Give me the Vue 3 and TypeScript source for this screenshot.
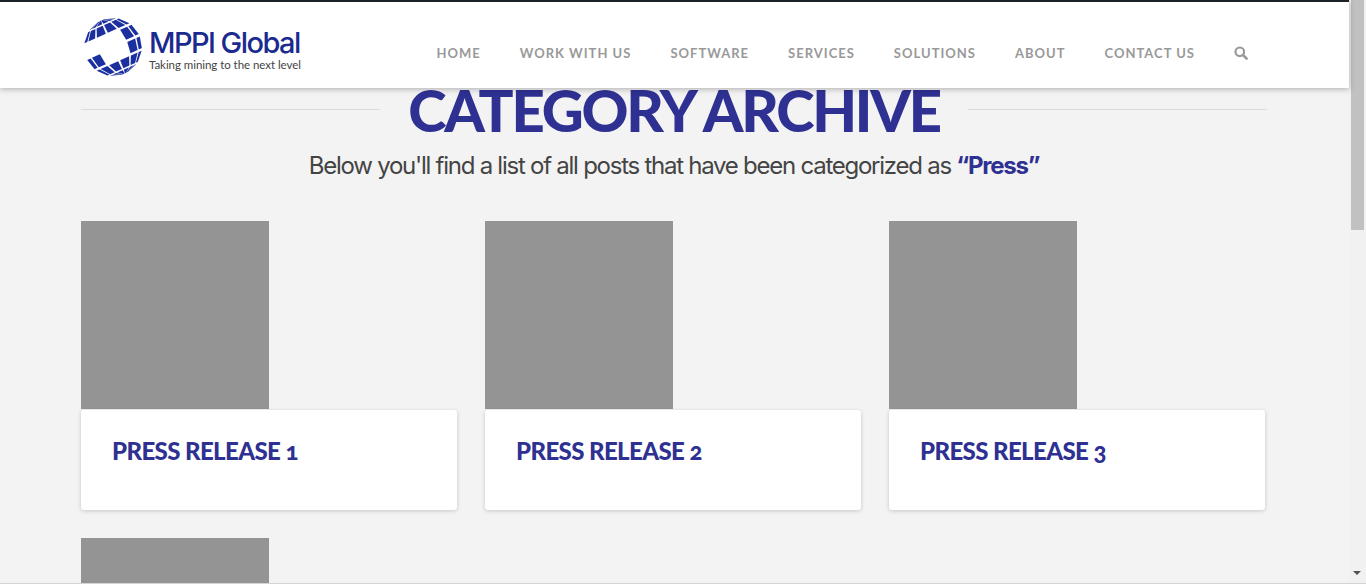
<script setup lang="ts">
const nav: string[] = ['Home', 'Work With Us', 'Software', 'Services', 'Solutions', 'About', 'Contact Us']
const posts: { id: number; title?: string }[] = [
  { id: 1, title: 'Press Release 1' },
  { id: 2, title: 'Press Release 2' },
  { id: 3, title: 'Press Release 3' },
  { id: 4 },
]

function tilePoints(i: number, j: number): string {
  const step = 0.5
  const gap = 0.045
  const rot = -0.42
  const corners: [number, number][] = [
    [i * step + gap, j * step + gap],
    [(i + 1) * step - gap, j * step + gap],
    [(i + 1) * step - gap, (j + 1) * step - gap],
    [i * step + gap, (j + 1) * step - gap],
  ]
  return corners
    .map(([u, v]) => {
      const su = Math.max(-1.57, Math.min(1.57, u))
      const sv = Math.max(-1.57, Math.min(1.57, v))
      const x = Math.sin(su) * Math.cos(sv)
      const y = Math.sin(sv)
      const rx = x * Math.cos(rot) - y * Math.sin(rot)
      const ry = x * Math.sin(rot) + y * Math.cos(rot)
      return `${(30 + rx * 29).toFixed(2)},${(30 + ry * 29).toFixed(2)}`
    })
    .join(' ')
}

const tiles: string[] = []
for (let i = -4; i < 4; i++) {
  for (let j = -4; j < 4; j++) {
    const inner = i >= -1 && i < 1 && j >= -1 && j < 1
    const gapLeft = i <= -2 && j === -1
    if (!inner && !gapLeft) tiles.push(tilePoints(i, j))
  }
}
</script>

<template>
  <div class="screen">
    <div class="page">
      <header class="masthead">
        <a class="brand" href="#">
          <svg class="globe" width="60" height="60" viewBox="0 0 60 60" aria-hidden="true">
            <polygon v-for="(t, k) in tiles" :key="k" :points="t" fill="#1c2f9e" />
          </svg>
          <span class="brand-text">
            <span class="brand-name">MPPI Global</span>
            <span class="brand-tag">Taking mining to the next level</span>
          </span>
        </a>
        <nav class="nav">
          <a v-for="item in nav" :key="item" href="#">{{ item }}</a>
          <svg class="search" width="14" height="14" viewBox="0 0 14 14" aria-label="Search">
            <circle cx="5.8" cy="5.8" r="4.3" fill="none" stroke="#999" stroke-width="2.2" />
            <path d="M9 9l3.6 3.6" stroke="#999" stroke-width="2.6" stroke-linecap="round" />
          </svg>
        </nav>
      </header>

      <main class="content">
        <div class="title-row">
          <span class="rule"></span>
          <h1>Category Archive</h1>
          <span class="rule"></span>
        </div>
        <p class="lede">Below you'll find a list of all posts that have been categorized as <strong>“Press”</strong></p>

        <div class="grid">
          <article v-for="post in posts" :key="post.id" class="post">
            <div class="thumb"></div>
            <div v-if="post.title" class="card">
              <h2>{{ post.title }}</h2>
            </div>
          </article>
        </div>
      </main>
    </div>

    <aside class="scrollbar" aria-hidden="true">
      <div class="thumb-bar"></div>
      <span class="arrow"></span>
    </aside>
    <div class="edge"></div>
  </div>
</template>

<style scoped>
.screen {
  position: relative;
  display: flex;
  width: 1366px;
  height: 584px;
  overflow: hidden;
  background: #f3f3f3;
}
.page {
  flex: 0 0 1349px;
  min-width: 0;
}
.masthead {
  position: relative;
  z-index: 2;
  box-sizing: border-box;
  height: 88px;
  display: flex;
  justify-content: space-between;
  padding: 0 101px 0 85px;
  background: #fff;
  border-top: 2px solid #1c2328;
  box-shadow: 0 1px 6px rgba(0, 0, 0, 0.3);
}
.brand {
  display: flex;
  align-items: center;
  gap: 5px;
  margin-top: 1px;
  height: 60px;
  padding-top: 14px;
  text-decoration: none;
}
.globe {
  flex: none;
  margin-left: -2px;
}
.brand-text {
  display: flex;
  flex-direction: column;
  margin-left: 1px;
  padding-top: 5px;
}
.brand-name {
  font: 500 29px/31px "Inter", sans-serif;
  letter-spacing: -1.55px;
  color: #1b2a8f;
}
.brand-tag {
  font: 400 11.5px/14px "Lato", sans-serif;
  letter-spacing: -0.05px;
  color: #444;
}
.nav {
  display: flex;
  align-items: center;
  gap: 39px;
  padding-top: 15px;
  box-sizing: border-box;
  height: 86px;
}
.nav a {
  font: 700 13px/18px "Lato", sans-serif;
  letter-spacing: 1px;
  text-transform: uppercase;
  text-decoration: none;
  color: #999;
}
.search {
  flex: none;
}
.content {
  width: 1186px;
  margin-left: 81px;
}
.title-row {
  display: flex;
  align-items: center;
  gap: 28px;
  height: 44px;
}
.rule {
  flex: 1;
  height: 1px;
  margin-top: -2px;
  background: #dcdcdc;
}
h1 {
  margin: 0;
  font: 900 58px/44px "Lato", sans-serif;
  letter-spacing: -2.2px;
  text-transform: uppercase;
  color: #2e3192;
  white-space: nowrap;
}
.lede {
  margin: 18px 0 0;
  text-align: center;
  font: 400 24px/32px "Inter", sans-serif;
  letter-spacing: -1.25px;
  color: #444;
}
.lede strong {
  font-weight: 700;
  color: #2e3192;
}
.grid {
  display: grid;
  grid-template-columns: repeat(3, 376px);
  gap: 28px;
  margin-top: 39px;
}
.thumb {
  width: 188px;
  height: 188px;
  background: #949494;
}
.card {
  box-sizing: border-box;
  height: 100px;
  margin-top: 1px;
  padding: 26px 31px;
  background: #fff;
  border-radius: 3px;
  box-shadow: 0 1px 4px rgba(0, 0, 0, 0.18);
}
h2 {
  margin: 0;
  font: 900 24px/30px "Lato", sans-serif;
  letter-spacing: -0.6px;
  font-variant-numeric: oldstyle-nums;
  text-transform: uppercase;
  color: #2e3192;
}
.scrollbar {
  position: relative;
  flex: 0 0 17px;
  box-sizing: border-box;
  padding: 0 2px;
  background: #f1f1f1;
}
.thumb-bar {
  width: 13px;
  height: 230px;
  background: #c1c1c1;
}
.arrow {
  position: absolute;
  left: 4px;
  top: 571px;
  border-left: 4px solid transparent;
  border-right: 4px solid transparent;
  border-top: 4px solid #505050;
}
.edge {
  position: absolute;
  left: 0;
  right: 0;
  bottom: 0;
  height: 1px;
  z-index: 3;
  background: #d4d4d4;
}
</style>
